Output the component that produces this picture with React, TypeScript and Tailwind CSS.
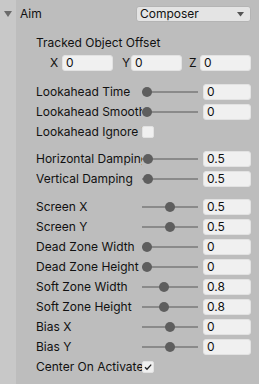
import React from "react";

type Row =
  | { kind: "slider"; label: string; value: string; pos: number }
  | { kind: "check"; label: string; checked: boolean };

const groupA: Row[] = [
  { kind: "slider", label: "Lookahead Time", value: "0", pos: 0 },
  { kind: "slider", label: "Lookahead Smoothing", value: "0", pos: 0 },
  { kind: "check", label: "Lookahead Ignore Y", checked: false },
];

const groupB: Row[] = [
  { kind: "slider", label: "Horizontal Damping", value: "0.5", pos: 0.02 },
  { kind: "slider", label: "Vertical Damping", value: "0.5", pos: 0.02 },
];

const groupC: Row[] = [
  { kind: "slider", label: "Screen X", value: "0.5", pos: 0.5 },
  { kind: "slider", label: "Screen Y", value: "0.5", pos: 0.5 },
  { kind: "slider", label: "Dead Zone Width", value: "0", pos: 0 },
  { kind: "slider", label: "Dead Zone Height", value: "0", pos: 0 },
  { kind: "slider", label: "Soft Zone Width", value: "0.8", pos: 0.37 },
  { kind: "slider", label: "Soft Zone Height", value: "0.8", pos: 0.37 },
  { kind: "slider", label: "Bias X", value: "0", pos: 0.5 },
  { kind: "slider", label: "Bias Y", value: "0", pos: 0.5 },
  { kind: "check", label: "Center On Activate", checked: true },
];

function Field({ value, className = "" }: { value: string; className?: string }) {
  return (
    <div
      className={`h-4 rounded-[3px] bg-[#f0f0f0] border border-[#e2e2e2] pl-[3px] text-[12px] leading-[14px] text-[#101010] ${className}`}
    >
      {value}
    </div>
  );
}

function Slider({ pos }: { pos: number }) {
  return (
    <div className="relative w-[56px] h-4 flex items-center">
      <div className="w-full h-[2px] bg-[#8a8a8a]" />
      {/* thumb sits over the track */}
      <div
        className="absolute top-[3px] w-[10px] h-[10px] rounded-full bg-[#5e5e5e]"
        style={{ left: 0 + pos * 46 }}
      />
    </div>
  );
}

function PropRow({ row }: { row: Row }) {
  return (
    <div className="h-5 flex items-center">
      <div className="w-[106px] overflow-hidden whitespace-nowrap text-[#111]">{row.label}</div>
      {row.kind === "slider" ? (
        <>
          <Slider pos={row.pos} />
          <Field value={row.value} className="ml-[5px] w-[48px]" />
        </>
      ) : (
        <div className="w-3 h-3 rounded-[2px] bg-[#f0f0f0] border border-[#e2e2e2] flex items-center justify-center">
          {row.checked && (
            <svg width="10" height="10" viewBox="0 0 10 10">
              <path d="M2 5.2 L4 7.2 L8.2 2.6" fill="none" stroke="#222" strokeWidth="1.3" />
            </svg>
          )}
        </div>
      )}
    </div>
  );
}

export default function App() {
  return (
    <div
      className="w-[259px] h-[384px] flex bg-[#c8c8c8] text-[12px] overflow-hidden"
      style={{ fontFamily: "Inter, 'Noto Sans', sans-serif" }}
    >
      <div className="w-4 pt-[11px] pl-1">
        <svg width="8" height="6" viewBox="0 0 8 6">
          <path d="M0 0 H8 L4 6 Z" fill="#6b6b6b" />
        </svg>
      </div>

      <div className="flex-1 bg-[#bdbdbd] pr-2 flex flex-col">
        <div className="h-5 mt-1 flex items-center pl-1">
          <span className="text-[#111]">Aim</span>
          <div className="ml-auto w-[115px] h-4 rounded-[3px] bg-[#e4e4e4] border border-[#b4b4b4] flex items-center pl-[3px] pr-[6px] text-[#111]">
            <span className="flex-1">Composer</span>
            <svg width="7" height="5" viewBox="0 0 7 5">
              <path d="M0 0 H7 L3.5 4.5 Z" fill="#555" />
            </svg>
          </div>
        </div>

        <div className="pl-5 flex flex-col">
          <div className="h-5 mt-[9px] flex items-center text-[#111]">Tracked Object Offset</div>
          <div className="h-5 flex items-center pl-[14px] text-[#111]">
            <span className="w-3">X</span>
            <Field value="0" className="w-[51px]" />
            <span className="w-[18px] pl-[9px]">Y</span>
            <Field value="0" className="w-[51px]" />
            <span className="w-[18px] pl-[7px]">Z</span>
            <Field value="0" className="w-[51px]" />
          </div>

          <div className="mt-[9px] flex flex-col">
            {groupA.map((r) => (
              <PropRow key={r.label} row={r} />
            ))}
          </div>
          <div className="mt-[7px] flex flex-col">
            {groupB.map((r) => (
              <PropRow key={r.label} row={r} />
            ))}
          </div>
          <div className="mt-2 flex flex-col">
            {groupC.map((r) => (
              <PropRow key={r.label} row={r} />
            ))}
          </div>
        </div>
      </div>
    </div>
  );
}
